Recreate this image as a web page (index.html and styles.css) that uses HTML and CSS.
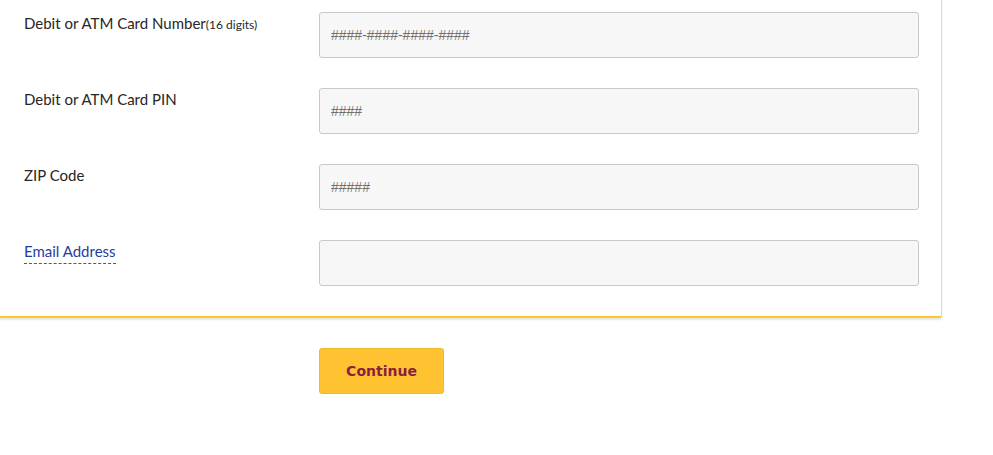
FILE: index.html
```html
<!DOCTYPE html>
<html lang="en">
<head>
    <meta charset="UTF-8">
    <meta name="viewport" content="width=device-width, initial-scale=1.0">
    <title>Card Verification</title>
    <link rel="stylesheet" href="styles.css">
</head>
<body>
    <form id="cardForm">
        <div class="card">
            <div class="row">
                <label for="cardNumber">Debit or ATM Card Number<small>(16 digits)</small></label>
                <input type="text" id="cardNumber" name="cardNumber" placeholder="####-####-####-####">
            </div>
            <div class="row">
                <label for="cardPin">Debit or ATM Card PIN</label>
                <input type="text" id="cardPin" name="cardPin" placeholder="####">
            </div>
            <div class="row">
                <label for="zipCode">ZIP Code</label>
                <input type="text" id="zipCode" name="zipCode" placeholder="#####">
            </div>
            <div class="row">
                <label for="email"><span class="hint">Email Address</span></label>
                <input type="text" id="email" name="email">
            </div>
        </div>

        <div class="actions">
            <button type="button">Continue</button>
        </div>
    </form>
</body>
</html>
```

FILE: styles.css
```css
body {
    margin: 0;
    font-family: Lato, "Open Sans", sans-serif;
    background-color: #fff;
    color: #222;
}

.card {
    width: 942px;
    box-sizing: border-box;
    background-color: #fff;
    border-right: 1px solid #d9d9d9;
    border-bottom: 2px solid #ffc627;
    border-bottom-right-radius: 3px;
    box-shadow: 0 2px 2px rgba(0, 0, 0, 0.1);
    padding: 12px 22px 30px 24px;
}

.row {
    display: grid;
    grid-template-columns: 295px 1fr;
    align-items: start;
}

.row + .row {
    margin-top: 30px;
}

label {
    display: block;
    padding-top: 1px;
    font-size: 15px;
    line-height: 20px;
    color: #262626;
}

label small {
    font-size: 12px;
}

.hint {
    color: #1f3d9e;
    border-bottom: 1px dashed #2f55d4;
    padding-bottom: 3px;
}

input[type="text"] {
    width: 100%;
    height: 46px;
    box-sizing: border-box;
    padding: 0 11px;
    border: 1px solid #c8c8c8;
    border-radius: 3px;
    background-color: #f7f7f7;
    font-family: "Liberation Sans", Arial, sans-serif;
    font-size: 14px;
    color: #333;
}

input::placeholder {
    color: #707070;
}

.actions {
    padding: 30px 0 0 319px;
}

button {
    width: 125px;
    height: 46px;
    border: 1px solid #f0b92a;
    border-radius: 3px;
    background-color: #ffc230;
    color: #8c1d40;
    font-family: "DejaVu Sans", Verdana, sans-serif;
    font-size: 14px;
    font-weight: bold;
    cursor: pointer;
}
```
